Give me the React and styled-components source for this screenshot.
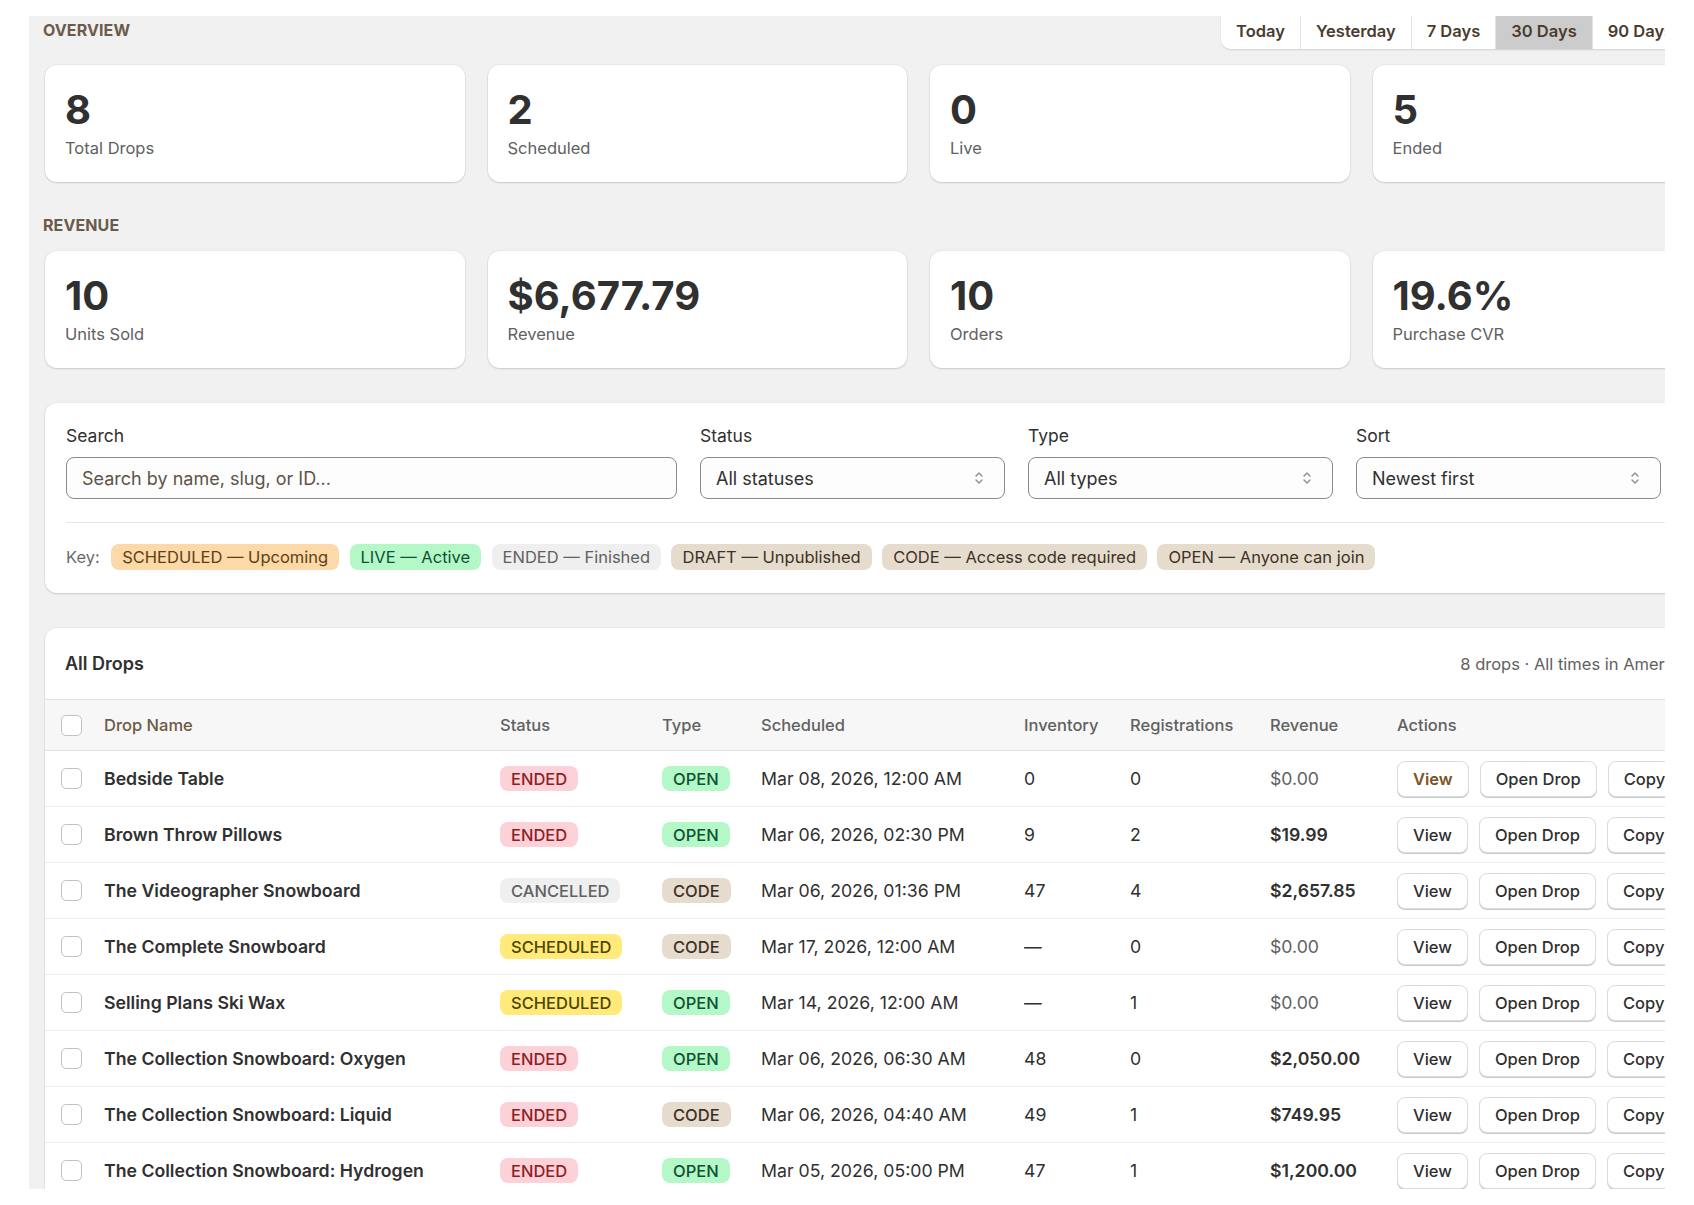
import React from "react";
import styled, { createGlobalStyle } from "styled-components";

const GlobalStyle = createGlobalStyle`
  html, body { margin: 0; padding: 0; background: #ffffff; }
  body { font-family: Inter, "Noto Sans", "Liberation Sans", sans-serif; color: #303030; -webkit-font-smoothing: antialiased; }
  * { box-sizing: border-box; }
`;

const Frame = styled.div`
  margin: 16px 0 0 29px;
  width: 1636px;
  height: 1173px;
  overflow: hidden;
  background: #f1f1f1;
`;

const Content = styled.div`
  width: 1772px;
  padding: 0 0 40px 16px;
  display: flex;
  flex-direction: column;
`;

const SectionHead = styled.div`
  display: flex;
  align-items: flex-start;
  justify-content: space-between;
  width: 1756px;
  height: 33px;
  margin-bottom: 16px;
`;

const SectionLabel = styled.div`
  font-size: 16px;
  font-weight: 700;
  letter-spacing: 0.1px;
  text-transform: uppercase;
  color: #6b5b4b;
  line-height: 20px;
  margin-left: -2px;
  padding-top: ${(p) => (p.$top ? "4px" : "0")};
  margin-top: ${(p) => (p.$spaced ? "33px" : "0")};
  margin-bottom: ${(p) => (p.$spaced ? "16px" : "0")};
`;

const Tabs = styled.div`
  display: flex;
  height: 33px;
  background: #ffffff;
  border-radius: 0 0 0 10px;
  box-shadow: 0 1px 2px rgba(0, 0, 0, 0.14);
  overflow: hidden;
`;

const Tab = styled.div`
  display: flex;
  align-items: center;
  padding: 0 15px 3px;
  font-size: 16.5px;
  font-weight: 600;
  color: #4a3c2e;
  background: ${(p) => (p.$active ? "#cccccc" : "#ffffff")};
  border-left: ${(p) => (p.$first ? "none" : "1px solid #e3e3e3")};
  white-space: nowrap;
`;

const StatGrid = styled.div`
  display: grid;
  grid-template-columns: repeat(4, 419.5px);
  gap: 23px;
`;

const StatCard = styled.div`
  background: #ffffff;
  border-radius: 12px;
  padding: 21px 20px 23px;
  box-shadow: 0 1px 2px rgba(0, 0, 0, 0.14), 0 0 0 1px rgba(0, 0, 0, 0.03);
  display: flex;
  flex-direction: column;
  gap: 3px;
`;

const StatValue = styled.div`
  font-size: 40px;
  font-weight: 700;
  line-height: 48px;
  color: #303030;
`;

const StatLabel = styled.div`
  font-size: 16.5px;
  line-height: 22px;
  color: #616161;
`;

const Card = styled.div`
  background: #ffffff;
  border-radius: 12px;
  box-shadow: 0 1px 2px rgba(0, 0, 0, 0.14), 0 0 0 1px rgba(0, 0, 0, 0.03);
  margin-top: 35px;
  width: 1747px;
`;

const FilterCard = styled(Card)`
  padding: 22px 21px 23px;
`;

const FilterGrid = styled.div`
  display: grid;
  grid-template-columns: 611px 305px 305px 305px;
  gap: 23px;
`;

const Field = styled.label`
  display: flex;
  flex-direction: column;
  gap: 10px;
`;

const FieldLabel = styled.span`
  font-size: 17.5px;
  line-height: 22px;
  color: #303030;
`;

const TextInput = styled.input`
  height: 42px;
  border: 1px solid #8a8a8a;
  border-radius: 8px;
  background: #fdfdfd;
  padding: 0 15px;
  font: inherit;
  font-size: 18px;
  color: #303030;
  outline: none;
  &::placeholder { color: #5f5347; }
`;

const SelectBox = styled.div`
  height: 42px;
  border: 1px solid #8a8a8a;
  border-radius: 8px;
  background: #fdfdfd;
  padding: 0 20px 0 15px;
  display: flex;
  align-items: center;
  justify-content: space-between;
  font-size: 18px;
  color: #303030;
`;

const Divider = styled.div`
  height: 1px;
  background: #e6e6e6;
  margin: 23px 0 21px;
`;

const KeyRow = styled.div`
  display: flex;
  align-items: center;
  gap: 10.4px;
`;

const KeyLabel = styled.span`
  font-size: 16.5px;
  color: #6b6b6b;
  margin-right: 1px;
`;

const tones = {
  peach: ["#fdd8a8", "#5b4214"],
  green: ["#b5f8c8", "#0c5132"],
  grey: ["#efefef", "#616161"],
  tan: ["#e6dccd", "#3d3125"],
  red: ["#fdd1d8", "#8e1f25"],
  yellow: ["#ffea7a", "#4f4500"],
};

const Badge = styled.span`
  display: inline-flex;
  align-items: center;
  height: ${(p) => (p.$key ? "26px" : "25px")};
  padding: 0 11px;
  border-radius: 8px;
  font-size: 16.5px;
  font-weight: ${(p) => (p.$key ? 400 : 500)};
  white-space: nowrap;
  background: ${(p) => tones[p.$tone][0]};
  color: ${(p) => tones[p.$tone][1]};
`;

const TableCard = styled(Card)`
  overflow: hidden;
`;

const TableTop = styled.div`
  height: 71px;
  padding: 0 20px;
  display: flex;
  align-items: center;
  justify-content: space-between;
`;

const TableTitle = styled.h2`
  margin: 0;
  font-size: 18px;
  font-weight: 600;
  color: #303030;
`;

const TableMeta = styled.span`
  font-size: 16.5px;
  color: #616161;
`;

const Table = styled.table`
  width: 100%;
  table-layout: fixed;
  border-collapse: collapse;
`;

const Th = styled.th`
  height: 51px;
  padding: 0;
  text-align: left;
  font-size: 16.5px;
  font-weight: 500;
  color: ${(p) => (p.$sorted ? "#6e5a42" : "#616161")};
  background: #f7f7f7;
  border-top: 1px solid #e3e3e3;
  border-bottom: 1px solid #e3e3e3;
  padding-left: ${(p) => (p.$first ? "16px" : "0")};
  white-space: nowrap;
`;

const Td = styled.td`
  height: 56px;
  padding: 0;
  padding-left: ${(p) => (p.$first ? "16px" : "0")};
  border-bottom: 1px solid #ebebeb;
  font-size: 17.7px;
  color: ${(p) => (p.$muted ? "#616161" : "#303030")};
  font-weight: ${(p) => (p.$strong ? 600 : 400)};
  white-space: nowrap;
  overflow: hidden;
`;

const Checkbox = styled.span`
  display: block;
  width: 21px;
  height: 21px;
  border: 1.5px solid #c2c2c2;
  border-radius: 5px;
  background: #ffffff;
`;

const Actions = styled.div`
  display: flex;
  gap: 11px;
`;

const Button = styled.button`
  height: 36px;
  padding: 0 15px;
  font: inherit;
  font-size: 16.5px;
  font-weight: ${(p) => (p.$accent ? 600 : 500)};
  color: ${(p) => (p.$accent ? "#7a5528" : "#303030")};
  background: #ffffff;
  border: 1px solid #dcdcdc;
  border-radius: 8px;
  box-shadow: 0 1px 0 #c9c9c9;
  white-space: nowrap;
`;

const Chevrons = () => (
  <svg width="10" height="16" viewBox="0 0 10 16" fill="none" stroke="#8a8a8a" strokeWidth="1.3" strokeLinecap="round" strokeLinejoin="round">
    <path d="M2 6 L5 3 L8 6" />
    <path d="M2 10 L5 13 L8 10" />
  </svg>
);

const overview = [
  ["8", "Total Drops"],
  ["2", "Scheduled"],
  ["0", "Live"],
  ["5", "Ended"],
];
const revenue = [
  ["10", "Units Sold"],
  ["$6,677.79", "Revenue"],
  ["10", "Orders"],
  ["19.6%", "Purchase CVR"],
];

const keys = [
  ["peach", "SCHEDULED — Upcoming"],
  ["green", "LIVE — Active"],
  ["grey", "ENDED — Finished"],
  ["tan", "DRAFT — Unpublished"],
  ["tan", "CODE — Access code required"],
  ["tan", "OPEN — Anyone can join"],
];

const statusTone = { ENDED: "red", CANCELLED: "grey", SCHEDULED: "yellow" };
const typeTone = { OPEN: "green", CODE: "tan" };

const drops = [
  ["Bedside Table", "ENDED", "OPEN", "Mar 08, 2026, 12:00 AM", "0", "0", "$0.00"],
  ["Brown Throw Pillows", "ENDED", "OPEN", "Mar 06, 2026, 02:30 PM", "9", "2", "$19.99"],
  ["The Videographer Snowboard", "CANCELLED", "CODE", "Mar 06, 2026, 01:36 PM", "47", "4", "$2,657.85"],
  ["The Complete Snowboard", "SCHEDULED", "CODE", "Mar 17, 2026, 12:00 AM", "—", "0", "$0.00"],
  ["Selling Plans Ski Wax", "SCHEDULED", "OPEN", "Mar 14, 2026, 12:00 AM", "—", "1", "$0.00"],
  ["The Collection Snowboard: Oxygen", "ENDED", "OPEN", "Mar 06, 2026, 06:30 AM", "48", "0", "$2,050.00"],
  ["The Collection Snowboard: Liquid", "ENDED", "CODE", "Mar 06, 2026, 04:40 AM", "49", "1", "$749.95"],
  ["The Collection Snowboard: Hydrogen", "ENDED", "OPEN", "Mar 05, 2026, 05:00 PM", "47", "1", "$1,200.00"],
];

const colWidths = [59, 396, 162, 99, 263, 106, 140, 127, 395];

export default function App() {
  return (
    <>
      <GlobalStyle />
      <Frame>
        <Content>
          <SectionHead>
            <SectionLabel $top>Overview</SectionLabel>
            <Tabs>
              {["Today", "Yesterday", "7 Days", "30 Days", "90 Days", "12 Months"].map((t, i) => (
                <Tab key={t} $first={i === 0} $active={t === "30 Days"}>{t}</Tab>
              ))}
            </Tabs>
          </SectionHead>
          <StatGrid>
            {overview.map(([v, l]) => (
              <StatCard key={l}>
                <StatValue>{v}</StatValue>
                <StatLabel>{l}</StatLabel>
              </StatCard>
            ))}
          </StatGrid>
          <SectionLabel $spaced>Revenue</SectionLabel>
          <StatGrid>
            {revenue.map(([v, l]) => (
              <StatCard key={l}>
                <StatValue>{v}</StatValue>
                <StatLabel>{l}</StatLabel>
              </StatCard>
            ))}
          </StatGrid>
          <FilterCard>
            <FilterGrid>
              <Field>
                <FieldLabel>Search</FieldLabel>
                <TextInput placeholder="Search by name, slug, or ID..." />
              </Field>
              <Field>
                <FieldLabel>Status</FieldLabel>
                <SelectBox><span>All statuses</span><Chevrons /></SelectBox>
              </Field>
              <Field>
                <FieldLabel>Type</FieldLabel>
                <SelectBox><span>All types</span><Chevrons /></SelectBox>
              </Field>
              <Field>
                <FieldLabel>Sort</FieldLabel>
                <SelectBox><span>Newest first</span><Chevrons /></SelectBox>
              </Field>
            </FilterGrid>
            <Divider />
            <KeyRow>
              <KeyLabel>Key:</KeyLabel>
              {keys.map(([tone, text]) => (
                <Badge key={text} $key $tone={tone}>{text}</Badge>
              ))}
            </KeyRow>
          </FilterCard>
          <TableCard>
            <TableTop>
              <TableTitle>All Drops</TableTitle>
              <TableMeta>8 drops · All times in America/New_York</TableMeta>
            </TableTop>
            <Table>
              <colgroup>
                {colWidths.map((w, i) => <col key={i} style={{ width: w }} />)}
              </colgroup>
              <thead>
                <tr>
                  <Th $first><Checkbox /></Th>
                  <Th $sorted>Drop Name</Th>
                  <Th>Status</Th>
                  <Th>Type</Th>
                  <Th>Scheduled</Th>
                  <Th>Inventory</Th>
                  <Th>Registrations</Th>
                  <Th>Revenue</Th>
                  <Th>Actions</Th>
                </tr>
              </thead>
              <tbody>
                {drops.map(([name, status, type, date, inv, reg, rev], i) => (
                  <tr key={name}>
                    <Td $first><Checkbox /></Td>
                    <Td $strong>{name}</Td>
                    <Td><Badge $tone={statusTone[status]}>{status}</Badge></Td>
                    <Td><Badge $tone={typeTone[type]}>{type}</Badge></Td>
                    <Td>{date}</Td>
                    <Td>{inv}</Td>
                    <Td>{reg}</Td>
                    <Td $muted={rev === "$0.00"} $strong={rev !== "$0.00"}>{rev}</Td>
                    <Td>
                      <Actions>
                        <Button $accent={i === 0}>View</Button>
                        <Button>Open Drop</Button>
                        <Button>Copy Link</Button>
                      </Actions>
                    </Td>
                  </tr>
                ))}
              </tbody>
            </Table>
          </TableCard>
        </Content>
      </Frame>
    </>
  );
}
